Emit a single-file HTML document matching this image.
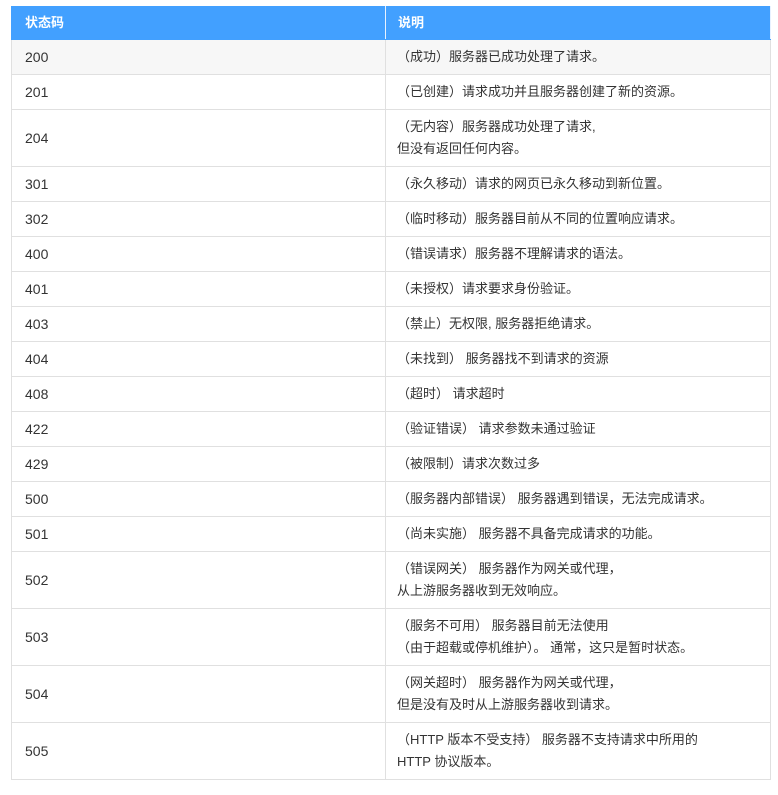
<!DOCTYPE html>
<html><head><meta charset="utf-8"><style>
body{margin:0;background:#fff;font-family:"Liberation Sans","Noto Sans CJK SC",sans-serif;font-size:13px;color:#333;}
table{position:absolute;left:11px;top:6px;width:760px;border-collapse:collapse;table-layout:fixed;}
th,td{border:1px solid #e0e0e0;padding:0 12px 0 13px;line-height:22px;text-align:left;vertical-align:middle;}
th{background:#42a0ff;color:#fff;font-weight:bold;border-color:#42a0ff;border-right-color:#e8f2ff;}
td:first-child{font-size:14px;}
td:nth-child(2){padding-left:11px;}
th:nth-child(2){padding-left:12px;}
tr{height:35px;}
tr.h{height:33px;}
tr.d{height:57px;}
tr.g td{background:#f7f7f7;}
</style></head><body>
<table>
<colgroup><col style="width:374px"><col></colgroup>
<tr class="h"><th>状态码</th><th>说明</th></tr>
<tr class="g"><td>200</td><td>（成功）服务器已成功处理了请求。</td></tr>
<tr><td>201</td><td>（已创建）请求成功并且服务器创建了新的资源。</td></tr>
<tr class="d"><td>204</td><td>（无内容）服务器成功处理了请求,<br>但没有返回任何内容。</td></tr>
<tr><td>301</td><td>（永久移动）请求的网页已永久移动到新位置。</td></tr>
<tr><td>302</td><td>（临时移动）服务器目前从不同的位置响应请求。</td></tr>
<tr><td>400</td><td>（错误请求）服务器不理解请求的语法。</td></tr>
<tr><td>401</td><td>（未授权）请求要求身份验证。</td></tr>
<tr><td>403</td><td>（禁止）无权限, 服务器拒绝请求。</td></tr>
<tr><td>404</td><td>（未找到） 服务器找不到请求的资源</td></tr>
<tr><td>408</td><td>（超时） 请求超时</td></tr>
<tr><td>422</td><td>（验证错误） 请求参数未通过验证</td></tr>
<tr><td>429</td><td>（被限制）请求次数过多</td></tr>
<tr><td>500</td><td>（服务器内部错误） 服务器遇到错误，无法完成请求。</td></tr>
<tr><td>501</td><td>（尚未实施） 服务器不具备完成请求的功能。</td></tr>
<tr class="d"><td>502</td><td>（错误网关） 服务器作为网关或代理，<br>从上游服务器收到无效响应。</td></tr>
<tr class="d"><td>503</td><td>（服务不可用） 服务器目前无法使用<br>（由于超载或停机维护）。 通常，这只是暂时状态。</td></tr>
<tr class="d"><td>504</td><td>（网关超时） 服务器作为网关或代理，<br>但是没有及时从上游服务器收到请求。</td></tr>
<tr class="d"><td>505</td><td>（HTTP 版本不受支持） 服务器不支持请求中所用的<br>HTTP 协议版本。</td></tr>
</table>
</body></html>
